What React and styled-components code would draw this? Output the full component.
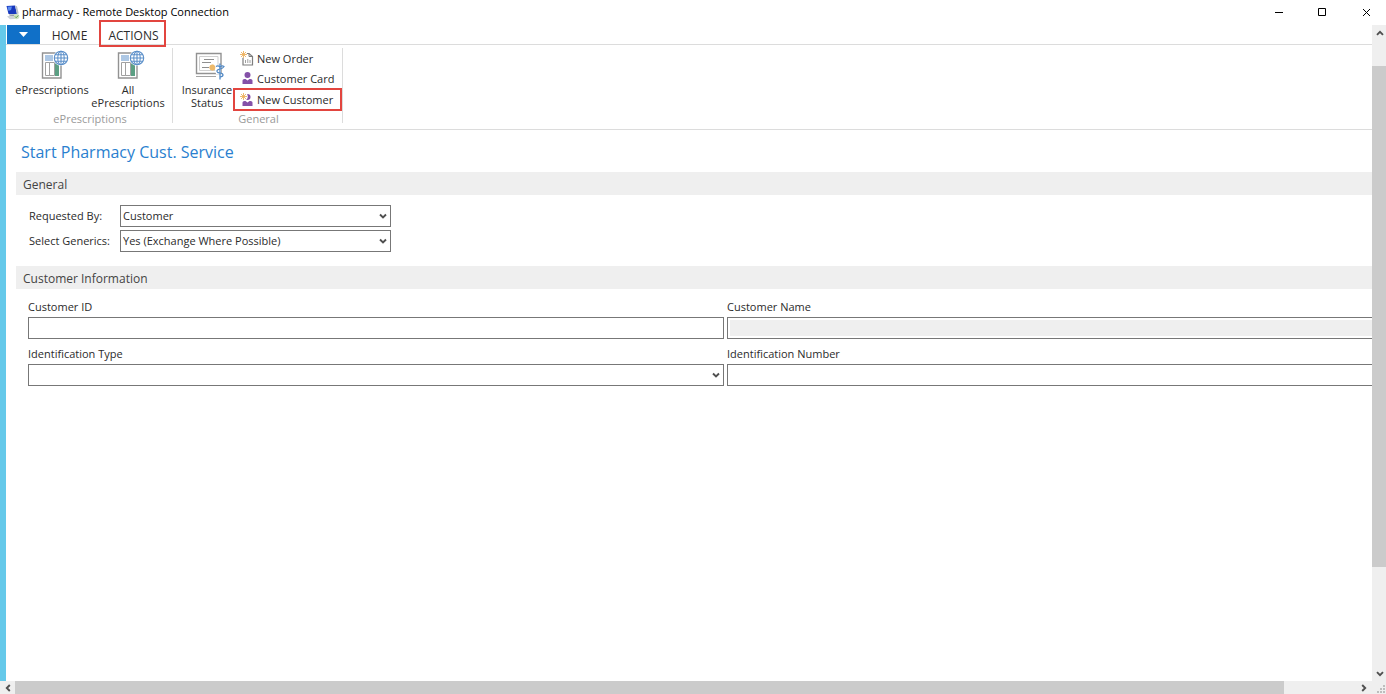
import React from "react";
import styled, { createGlobalStyle } from "styled-components";

const GlobalStyle = createGlobalStyle`
  * {
    box-sizing: border-box;
  }
  body {
    margin: 0;
    background: #fff;
    color: #2b2b2b;
    font-family: "Open Sans", "Noto Sans", sans-serif;
    font-size: 11px;
    line-height: 13px;
    overflow: hidden;
  }
  button, input, select {
    margin: 0;
    padding: 0;
    border: 0;
    border-radius: 0;
    background: none;
    color: inherit;
    font: inherit;
  }
`;

const Window = styled.div`
  display: flex;
  flex-direction: column;
  height: 100vh;
`;

const TitleBar = styled.header`
  display: flex;
  align-items: center;
  flex: none;
  height: 25px;
  padding-left: 6px;
  color: #000;
`;

const WindowTitle = styled.span`
  flex: 1;
  padding: 0 0 2px 2px;
  line-height: 22px;
`;

const WindowButton = styled.button`
  display: flex;
  align-items: center;
  justify-content: center;
  width: 44px;
  height: 24px;
  padding-left: 4px;
`;

const Body = styled.div`
  display: flex;
  flex: 1;
  min-height: 0;
`;

const Desktop = styled.div`
  flex: 1;
  min-width: 0;
  overflow-x: clip;
  border-left: 6px solid #65c9ea;
`;

const TabBar = styled.nav`
  display: flex;
  height: 20px;
  border-bottom: 1px solid #dcdcdc;
`;

const FileTab = styled.button`
  display: flex;
  align-items: center;
  justify-content: center;
  width: 33px;
  height: 19px;
  margin-left: 1px;
  background: #1070c8;
`;

const Tab = styled.button`
  height: 19px;
  width: ${props => props.width};
  padding-top: 2px;
  font-size: 12px;
  line-height: 17px;
`;

const ActiveTab = styled(Tab)`
  height: 27px;
  margin-top: -5px;
  padding: 4px 0 0 2px;
  border: 2px solid #e2453f;
  line-height: 19px;
`;

const Ribbon = styled.div`
  display: flex;
  height: 85px;
  padding-top: 3px;
  border-bottom: 1px solid #dcdcdc;
`;

const Group = styled.section`
  display: flex;
  flex-direction: column;
  width: ${props => props.width};
  height: 75px;
  border-right: 1px solid #dcdcdc;
`;

const GroupItems = styled.div`
  display: flex;
  align-items: flex-start;
  flex: none;
  height: 63px;
`;

const GroupName = styled.h2`
  margin: 0;
  padding-left: 2px;
  font-size: 11px;
  font-weight: normal;
  line-height: 16px;
  text-align: center;
  color: #9a9a9a;
`;

const LargeButton = styled.button`
  display: flex;
  flex-direction: column;
  align-items: center;
  gap: 3px;
  width: ${props => props.width};
  padding-top: 2px;
  margin-left: ${props => props.indent || "0"};
  white-space: nowrap;

  svg {
    margin-left: 5px;
  }
`;

const SmallButtons = styled.div`
  display: flex;
  flex-direction: column;
  flex: 1;
`;

const SmallButton = styled.button`
  display: flex;
  align-items: center;
  gap: 3px;
  height: ${props => (props.$marked ? "23px" : "20px")};
  padding-left: ${props => (props.$marked ? "5px" : "7px")};
  border: ${props => (props.$marked ? "2px solid #e2453f" : "0")};
  white-space: nowrap;
`;

const PageTitle = styled.h1`
  margin: 0;
  padding: 10px 0 8px 15px;
  font-size: 16px;
  font-weight: normal;
  line-height: 24px;
  color: #2a7fcf;
`;

const SectionTitle = styled.h2`
  height: 23px;
  margin: 0 0 0 10px;
  padding: 1px 0 0 7px;
  background: #efefef;
  font-size: 12px;
  font-weight: normal;
  line-height: 24px;
  color: #444;
`;

const Options = styled.div`
  display: grid;
  grid-template-columns: 91px 271px;
  row-gap: 3px;
  align-items: center;
  padding: 10px 0 14px 23px;
`;

const Details = styled.div`
  display: grid;
  grid-template-columns: 1fr 1fr;
  column-gap: 3px;
  row-gap: 6px;
  margin-right: -51px;
  padding: 9px 0 0 22px;
`;

const Field = styled.div`
  display: flex;
  flex-direction: column;
`;

const FieldLabel = styled.label`
  padding-bottom: 2px;
  line-height: 17px;
`;

const TextBox = styled.input`
  width: 100%;
  height: 22px;
  padding: 2px;
  border: 1px solid #777;
  background: #fff;

  &:read-only {
    background: #efefef content-box;
  }
`;

const SelectBox = styled.div`
  position: relative;
`;

const Select = styled.select`
  display: block;
  appearance: none;
  width: 100%;
  height: 22px;
  padding: 0 20px 1px 2px;
  border: 1px solid #777;
  background: #fff;
  line-height: 16px;
`;

const SelectArrow = styled.svg`
  position: absolute;
  right: 4px;
  top: 8px;
  pointer-events: none;
`;

const VerticalBar = styled.div`
  display: flex;
  flex-direction: column;
  flex: none;
  width: 14px;
  background: #efefef;
`;

const HorizontalBar = styled.div`
  display: flex;
  flex: none;
  height: 13px;
  background: #efefef;
`;

const ScrollButton = styled.button`
  display: flex;
  align-items: center;
  justify-content: center;
  flex: none;
  width: 15px;
  height: 15px;

  ${HorizontalBar} & {
    height: 13px;
  }
`;

const Track = styled.div`
  flex: ${props => props.$size} 0 0;
`;

const Thumb = styled(Track)`
  background: #cbcbcb;
`;

const Chevron = ({ turn = 0 }) => (
  <svg width="8" height="8" viewBox="0 0 8 8">
    <path
      d="M1 2.2 4 5.2 7 2.2"
      fill="none"
      stroke="#505050"
      strokeWidth="1.9"
      transform={`rotate(${turn} 4 4)`}
    />
  </svg>
);

const ComputerIcon = () => (
  <svg width="14" height="15" viewBox="0 0 14 15">
    <path d="M.5 1 9 .5l2 8.5-8.500 0z" fill="#1738bd" />
    <path d="M1.500 1.800 6 1.500 5 5 2.500 6z" fill="#5b8bf0" />
    <path d="M9 .5l2 .7 1.700 7.300-1.700.5z" fill="#b9bfc9" />
    <path d="M3 9.500h7l-1 1.500H4z" fill="#7d8796" />
    <path d="M1 11.500 4 10.500l6 .5-1 3-5 .3z" fill="#cdd2d8" />
    <circle cx="10.500" cy="11.500" r="2.800" fill="#cfe3c3" />
    <path d="M9 11.500l1.200 1.200 2-2.200" fill="none" stroke="#5f9a4c" />
  </svg>
);

const PrescriptionsIcon = () => (
  <svg width="28" height="30" viewBox="0 0 28 30">
    <path d="M1.500 3h18.500v25H1.500z" fill="#fff" stroke="#929292" strokeWidth="1.4" />
    <path d="M4 6h8M4 8h8M4 10h8" stroke="#5b8fc9" />
    <path d="M4.5 12.5h4v13h-4zM8.500 12.5h5v13h-5z" fill="#fff" stroke="#a0a0a0" />
    <path d="M14 13h4v13h-4z" fill="#5b9f83" />
    <circle cx="20" cy="8" r="7.800" fill="#fff" />
    <g fill="none" stroke="#5b8fc9" strokeWidth="1.1">
      <circle cx="20" cy="8" r="6.7" />
      <ellipse cx="20" cy="8" rx="3.2" ry="6.7" />
      <path d="M20 1.3v13.4M13.3 8h13.4M14.5 4.7h11M14.5 11.3h11" />
    </g>
  </svg>
);

const InsuranceIcon = () => (
  <svg width="30" height="30" viewBox="0 0 30 30">
    <path d="M1.500 3.500h24.500v20H1.500z" fill="#fff" stroke="#929292" strokeWidth="1.4" />
    <path d="M4.5 6.5h18.500v14h-18.500z" fill="none" stroke="#cfcfcf" />
    <path d="M1 26.500h20" stroke="#a5a5a5" />
    <path d="M9 9.500h10M7 12.500h9M7 17.500h7" stroke="#8f8f8f" />
    <circle cx="17.500" cy="17.500" r="3" fill="#edb96a" />
    <path d="M19 15h7v9h-5z" fill="#fff" />
    <circle cx="17.500" cy="17.500" r="2.800" fill="#edb96a" />
    <path d="M25 13.500v16" stroke="#4f87c4" strokeWidth="1.300" />
    <path
      d="M21 16.500q2-1.500 4 .5 2-2 4-.5-1 2-4 2.500-3.500.8-3 2.500.5 1.500 3 1.500 3 .3 3 2 0 1.500-3 2"
      fill="none"
      stroke="#4f87c4"
      strokeWidth="1.200"
    />
  </svg>
);

const Spark = () => (
  <path
    d="M3.500 0v7M0 3.500h7M1 1l5 5M6 1 1 6"
    stroke="#edb15d"
    strokeWidth=".9"
  />
);

const OrderIcon = () => (
  <svg width="14" height="15" viewBox="0 0 14 15">
    <path d="M3 2.5h6l3.5 3V14H3z" fill="#fff" stroke="#7d7d7d" strokeWidth="1.2" />
    <path d="M9 2.5v3h3.5" fill="none" stroke="#7d7d7d" />
    <path d="M5.5 12V9M7.8 12V8M10 12V9" stroke="#a0a0a0" />
    <circle cx="3.5" cy="3.5" r="3.5" fill="#fff" />
    <Spark />
  </svg>
);

const CustomerIcon = ({ isNew }) => (
  <svg width="14" height="14" viewBox="0 0 14 14">
    <circle cx="7.500" cy="4" r="3" fill="#8451a8" />
    <path d="M2.5 13V9.5Q2.5 8 4.5 8h1l2 1.600 2-1.600h1q2 0 2 1.500V13z" fill="#8451a8" />
    {isNew && <circle cx="4" cy="3.5" r="3.800" fill="#fff" />}
    {isNew && <Spark />}
  </svg>
);

const SelectField = ({ id, options }) => (
  <SelectBox>
    <Select id={id}>
      {options.map(option => (
        <option key={option}>{option}</option>
      ))}
    </Select>
    <SelectArrow width="8" height="7" viewBox="0 0 8 7">
      <path d="M1 1.500 4 4.500 7 1.500" fill="none" stroke="#505050" strokeWidth="1.9" />
    </SelectArrow>
  </SelectBox>
);

class App extends React.Component {
  renderTitleBar() {
    return (
      <TitleBar>
        <ComputerIcon />
        <WindowTitle>pharmacy - Remote Desktop Connection</WindowTitle>
        <WindowButton aria-label="Minimize">
          <svg width="9" height="9">
            <path d="M1 4.500h8" stroke="#000" />
          </svg>
        </WindowButton>
        <WindowButton aria-label="Maximize">
          <svg width="9" height="9">
            <path d="M.5.5h7v7h-7z" fill="none" stroke="#000" />
          </svg>
        </WindowButton>
        <WindowButton aria-label="Close">
          <svg width="9" height="9">
            <path d="M1 1l7 7M8 1 1 8" stroke="#000" />
          </svg>
        </WindowButton>
      </TitleBar>
    );
  }

  renderRibbon() {
    return (
      <Ribbon>
        <Group width="167px">
          <GroupItems>
            <LargeButton width="76px" indent="8px">
              <PrescriptionsIcon />
              <span>ePrescriptions</span>
            </LargeButton>
            <LargeButton width="76px">
              <PrescriptionsIcon />
              <span>
                All
                <br />
                ePrescriptions
              </span>
            </LargeButton>
          </GroupItems>
          <GroupName>ePrescriptions</GroupName>
        </Group>
        <Group width="170px">
          <GroupItems>
            <LargeButton width="52px" indent="8px">
              <InsuranceIcon />
              <span>
                Insurance
                <br />
                Status
              </span>
            </LargeButton>
            <SmallButtons>
              <SmallButton>
                <OrderIcon />
                New Order
              </SmallButton>
              <SmallButton>
                <CustomerIcon />
                Customer Card
              </SmallButton>
              <SmallButton $marked>
                <CustomerIcon isNew />
                New Customer
              </SmallButton>
            </SmallButtons>
          </GroupItems>
          <GroupName>General</GroupName>
        </Group>
      </Ribbon>
    );
  }

  renderForm() {
    return (
      <form>
        <PageTitle>Start Pharmacy Cust. Service</PageTitle>
        <SectionTitle>General</SectionTitle>
        <Options>
          <FieldLabel htmlFor="requestedBy">Requested By:</FieldLabel>
          <SelectField id="requestedBy" options={["Customer"]} />
          <FieldLabel htmlFor="generics">Select Generics:</FieldLabel>
          <SelectField id="generics" options={["Yes (Exchange Where Possible)"]} />
        </Options>
        <SectionTitle>Customer Information</SectionTitle>
        <Details>
          <Field>
            <FieldLabel htmlFor="customerId">Customer ID</FieldLabel>
            <TextBox id="customerId" />
          </Field>
          <Field>
            <FieldLabel htmlFor="customerName">Customer Name</FieldLabel>
            <TextBox id="customerName" readOnly />
          </Field>
          <Field>
            <FieldLabel htmlFor="idType">Identification Type</FieldLabel>
            <SelectField id="idType" options={[""]} />
          </Field>
          <Field>
            <FieldLabel htmlFor="idNumber">Identification Number</FieldLabel>
            <TextBox id="idNumber" />
          </Field>
        </Details>
      </form>
    );
  }

  render() {
    return (
      <Window>
        <GlobalStyle />
        {this.renderTitleBar()}
        <Body>
          <Desktop>
            <TabBar>
              <FileTab aria-label="File">
                <svg width="9" height="5">
                  <path d="M0 0h9L4.500 5z" fill="#fff" />
                </svg>
              </FileTab>
              <Tab width="59px">HOME</Tab>
              <ActiveTab width="67px">ACTIONS</ActiveTab>
            </TabBar>
            {this.renderRibbon()}
            {this.renderForm()}
          </Desktop>
          <VerticalBar>
            <ScrollButton aria-label="Scroll up">
              <Chevron turn={180} />
            </ScrollButton>
            <Track $size={26} />
            <Thumb $size={501} />
            <Track $size={99} />
            <ScrollButton aria-label="Scroll down">
              <Chevron />
            </ScrollButton>
          </VerticalBar>
        </Body>
        <HorizontalBar>
          <ScrollButton aria-label="Scroll left">
            <Chevron turn={90} />
          </ScrollButton>
          <Thumb $size={1269} />
          <Track $size={72} />
          <ScrollButton aria-label="Scroll right">
            <Chevron turn={-90} />
          </ScrollButton>
          <svg width="15" height="13">
            <path
              d="M12 4h2v2h-2zM9 7h2v2H9zM12 7h2v2h-2zM6 10h2v2H6zM9 10h2v2H9zM12 10h2v2h-2z"
              fill="#bdbdbd"
            />
          </svg>
        </HorizontalBar>
      </Window>
    );
  }
}

export default App;
